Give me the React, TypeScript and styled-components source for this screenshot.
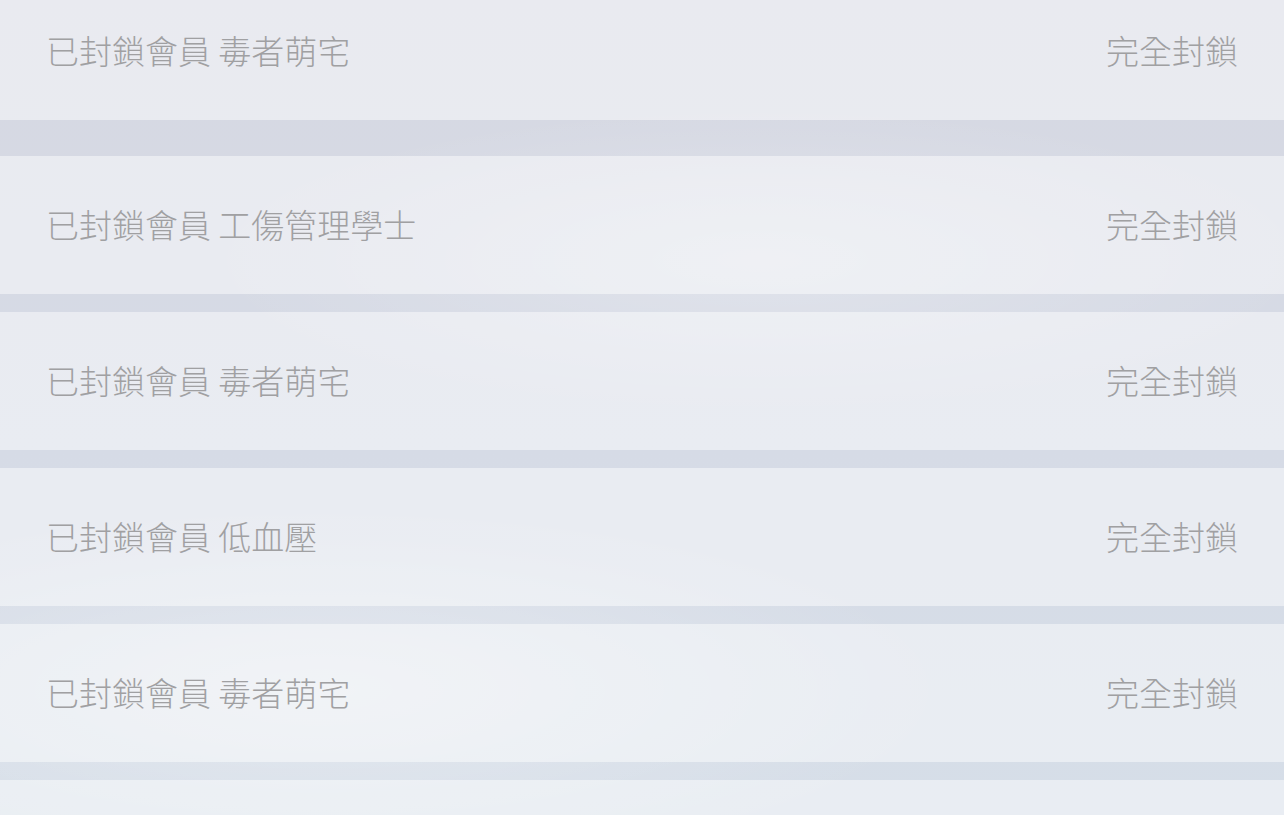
import React from "react";
import styled, { createGlobalStyle } from "styled-components";

const GlobalStyle = createGlobalStyle`
  html, body {
    margin: 0;
    padding: 0;
    height: 100%;
    overflow: hidden;
  }
  body {
    font-family: "Noto Sans CJK TC", "Noto Sans", sans-serif;
    background: #d6dbe6;
  }
`;

const Page = styled.div`
  position: relative;
  width: 1284px;
  height: 815px;
  overflow: hidden;
  background:
    radial-gradient(ellipse 900px 260px at 320px 690px, rgba(255, 255, 255, 0.35), rgba(255, 255, 255, 0) 70%),
    radial-gradient(ellipse 800px 220px at 760px 260px, rgba(255, 255, 255, 0.25), rgba(255, 255, 255, 0) 70%),
    linear-gradient(180deg, #d6d8e2 0%, #d6dbe6 55%, #d6dee8 100%);
`;

const List = styled.div`
  display: flex;
  flex-direction: column;
  margin-top: -18px;
`;

const Row = styled.div<{ $gap: number }>`
  display: flex;
  align-items: center;
  justify-content: space-between;
  height: 138px;
  padding: 0 46px 2px 46px;
  box-sizing: border-box;
  margin-bottom: ${(p) => p.$gap}px;
  background: rgba(255, 255, 255, 0.47);
  flex-shrink: 0;
`;

const Name = styled.span`
  font-size: 33px;
  font-weight: 300;
  color: #a0a0a2;
  white-space: nowrap;
`;

const Status = styled.span`
  font-size: 33px;
  font-weight: 300;
  color: #a0a0a2;
  white-space: nowrap;
`;

const members = ["毒者萌宅", "工傷管理學士", "毒者萌宅", "低血壓", "毒者萌宅"];

export default function App() {
  return (
    <>
      <GlobalStyle />
      <Page>
        <List>
          {members.map((m, i) => (
            <Row key={i} $gap={i === 0 ? 36 : 18}>
              <Name>已封鎖會員 {m}</Name>
              <Status>完全封鎖</Status>
            </Row>
          ))}
          <Row $gap={0} />
        </List>
      </Page>
    </>
  );
}
